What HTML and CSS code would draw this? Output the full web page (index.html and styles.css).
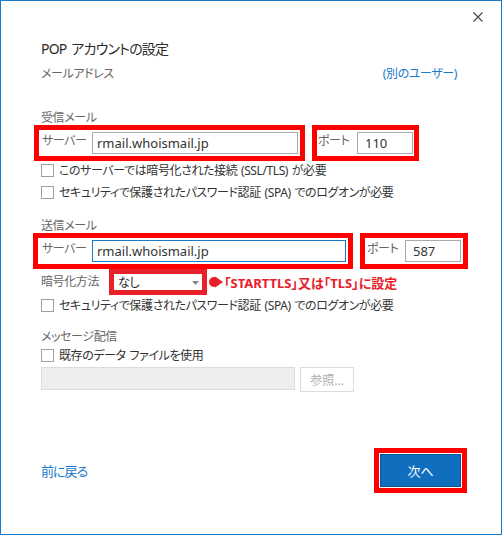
FILE: index.html
```html
<!doctype html>
<html lang="ja">
  <head>
    <meta charset="UTF-8" />
    <meta name="viewport" content="width=device-width, initial-scale=1.0" />
    <title>POP アカウントの設定</title>
    <link rel="stylesheet" href="styles.css">
  </head>
  <body>
    <div class="dialog">
      <div class="topbar">
        <button class="close" aria-label="閉じる">
          <svg width="10" height="10" viewBox="0 0 10 10">
            <path d="M0.5 0.5L9.5 9.5M9.5 0.5L0.5 9.5" stroke="#444" stroke-width="1.1" fill="none" />
          </svg>
        </button>
      </div>

      <h1 class="title">POP アカウントの設定</h1>
      <div class="account-row">
        <span class="muted">メールアドレス</span>
        <a class="link" href="#">(別のユーザー)</a>
      </div>

      <!-- incoming -->
      <div class="section-label incoming">受信メール</div>
      <div class="server-row in">
        <div class="mark server-box">
          <span class="field-label">サーバー</span>
          <div class="input">rmail.whoismail.jp</div>
        </div>
        <div class="mark port-box">
          <span class="field-label">ポート</span>
          <div class="input port">110</div>
        </div>
      </div>
      <div class="check first"><span class="box"></span>このサーバーでは暗号化された接続 (SSL/TLS) が必要</div>
      <div class="check second"><span class="box"></span>セキュリティで保護されたパスワード認証 (SPA) でのログオンが必要</div>

      <!-- outgoing -->
      <div class="section-label outgoing">送信メール</div>
      <div class="server-row out">
        <div class="mark server-box">
          <span class="field-label">サーバー</span>
          <div class="input focused">rmail.whoismail.jp</div>
        </div>
        <div class="mark port-box">
          <span class="field-label">ポート</span>
          <div class="input port">587</div>
        </div>
      </div>
      <div class="enc-row">
        <span class="field-label enc-label">暗号化方法</span>
        <div class="enc-box">
          <div class="select">
            <span>なし</span>
            <svg width="7" height="4" viewBox="0 0 7 4"><path d="M0 0H7L3.5 4Z" fill="#888" /></svg>
          </div>
        </div>
        <svg class="pointer" width="14" height="12" viewBox="0 0 14 12">
          <circle cx="5" cy="6" r="5" fill="#e8202a" />
          <path d="M6 0.5L14 6L6 11.5Z" fill="#e8202a" />
        </svg>
        <span class="note">「STARTTLS」又は「TLS」に設定</span>
      </div>
      <div class="check third"><span class="box"></span>セキュリティで保護されたパスワード認証 (SPA) でのログオンが必要</div>

      <!-- delivery -->
      <div class="section-label delivery">メッセージ配信</div>
      <div class="check fourth"><span class="box"></span>既存のデータ ファイルを使用</div>
      <div class="file-row">
        <div class="file-input"></div>
        <button class="browse" disabled>参照...</button>
      </div>

      <div class="footer">
        <a class="link back" href="#">前に戻る</a>
        <div class="next-mark">
          <button class="next">次へ</button>
        </div>
      </div>
    </div>
  </body>
</html>
```

FILE: styles.css
```css
* {
  margin: 0;
  padding: 0;
  box-sizing: border-box;
}

body {
  font-family: "Noto Sans", "Noto Sans CJK JP", sans-serif;
  font-feature-settings: "palt";
  font-size: 12px;
  letter-spacing: -0.4px;
  color: #333;
  background: #fff;
}

.dialog {
  width: 502px;
  height: 535px;
  border: 1px solid #1979ca;
  padding: 0 33px 41px 40px;
  display: flex;
  flex-direction: column;
}

.topbar {
  display: flex;
  justify-content: flex-end;
  padding-top: 11px;
  margin-right: -15px;
}

.close {
  width: 10px;
  height: 10px;
  border: none;
  background: none;
  display: block;
}

.close svg {
  display: block;
}

.title {
  margin-top: 17px;
  font-size: 14px;
  letter-spacing: -0.8px;
  word-spacing: 2px;
  line-height: 20px;
  font-weight: 400;
  color: #2b2b2b;
}

.account-row {
  margin-top: 7px;
  display: flex;
  justify-content: space-between;
  padding-right: 11px;
  line-height: 16px;
}

.muted {
  color: #666;
}

.link {
  color: #1979ca;
  text-decoration: none;
}

.section-label {
  color: #666;
  line-height: 14px;
}

.section-label.incoming {
  margin-top: 29px;
}

.section-label.outgoing {
  margin-top: 19px;
}

.section-label.delivery {
  margin-top: 17px;
}

/* server / port groups, marked with red frames */
.server-row {
  display: flex;
  gap: 7px;
}

.server-row.in {
  margin-left: -7px;
}

.server-row.out {
  margin-left: -8px;
}

.mark {
  display: flex;
  align-items: flex-start;
  border: 5px solid #f00;
  padding: 2px 2px 2px 0;
}

.field-label {
  color: #666;
  line-height: 16px;
  padding-top: 1px;
}

.server-box .field-label {
  width: 53px;
  padding-left: 3px;
}

.out .server-box .field-label {
  width: 54px;
  padding-left: 4px;
}

.port-box .field-label {
  width: 40px;
  padding-left: 1px;
}

.in .port-box {
  padding-right: 1px;
}

.out .port-box .field-label {
  padding-left: 2px;
}

.input {
  height: 22px;
  border: 1px solid #ababab;
  background: #fff;
  font-size: 13px;
  letter-spacing: 0;
  line-height: 20px;
  padding-left: 4px;
  color: #333;
  width: 206px;
}

.out .input {
  width: 254px;
}

.input.port,
.out .input.port {
  width: 56px;
  padding-left: 7px;
}

.input.focused {
  border-color: #1979ca;
}

/* checkboxes */
.check {
  display: flex;
  align-items: center;
  height: 15px;
  line-height: 15px;
  color: #333;
  word-spacing: 1px;
}

.check .box {
  width: 13px;
  height: 13px;
  border: 1px solid #a0a0a0;
  background: #fff;
  margin-right: 5px;
  flex-shrink: 0;
}

.check.first {
  margin-top: 2px;
}

.check.second {
  margin-top: 7px;
}

.check.third {
  margin-top: 3px;
}

.check.fourth {
  margin-top: 4px;
}

/* encryption row */
.enc-row {
  display: flex;
  align-items: center;
  height: 26px;
}

.enc-label {
  width: 68px;
  padding-top: 0;
}

.enc-box {
  border: 5px solid #e8202a;
  width: 98px;
  height: 26px;
}

.select {
  height: 16px;
  display: flex;
  align-items: center;
  justify-content: space-between;
  padding: 1px 3px 0 4px;
  color: #222;
  line-height: 15px;
}

.pointer {
  margin-left: 2px;
  flex-shrink: 0;
}

.note {
  margin-left: 1px;
  color: #e8202a;
  font-weight: 700;
  font-size: 13px;
  letter-spacing: 0;
}

/* data file */
.file-row {
  margin-top: 4px;
  display: flex;
  align-items: flex-start;
  gap: 5px;
}

.file-input {
  width: 254px;
  height: 23px;
  background: #eee;
  border: 1px solid #dcdcdc;
}

.browse {
  width: 54px;
  height: 25px;
  border: 1px solid #dcdcdc;
  background: #fff;
  color: #adadad;
  font-family: inherit;
  font-size: 12px;
}

/* footer */
.footer {
  margin-top: auto;
  display: flex;
  justify-content: space-between;
  align-items: center;
  padding-right: 1px;
}

.back {
  font-size: 13px;
  letter-spacing: -1px;
}

.next-mark {
  border: 5px solid #f00;
  padding: 1px;
}

.next {
  display: block;
  width: 81px;
  height: 33px;
  background: #106ebe;
  border: 1px solid #0b5596;
  color: #fff;
  font-family: inherit;
  font-size: 13px;
}
```
